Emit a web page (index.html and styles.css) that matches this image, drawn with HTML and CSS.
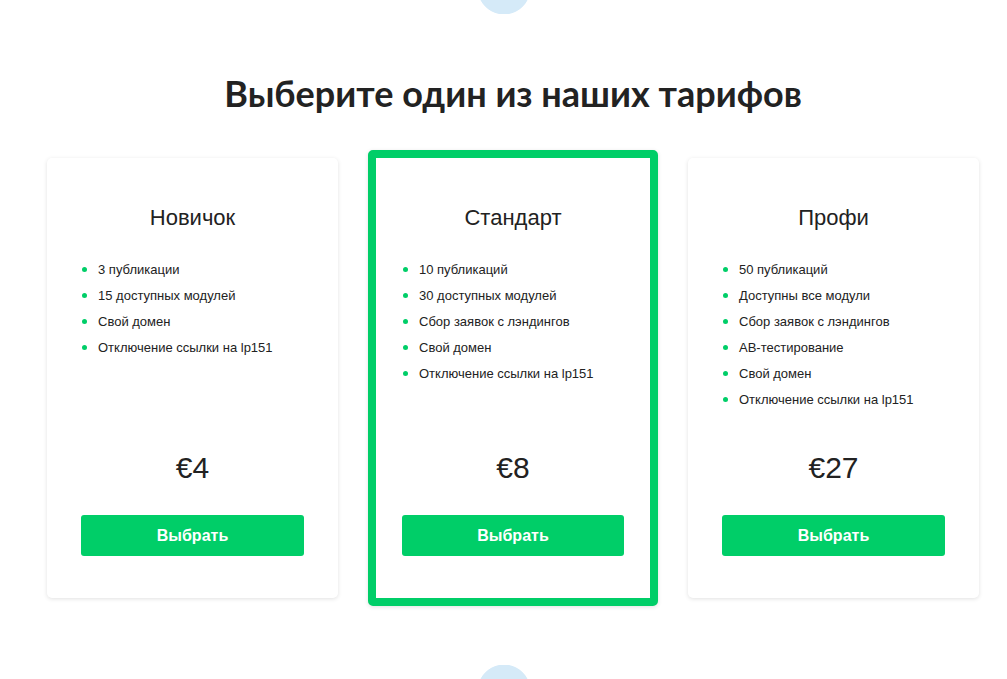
FILE: index.html
```html
<!DOCTYPE html>
<html lang="ru">
<head>
<meta charset="utf-8">
<title>Тарифы</title>
<link rel="stylesheet" href="styles.css">
</head>
<body>
<div class="deco deco-top"></div>
<section class="pricing">
  <h1 class="pricing-title">Выберите один из наших тарифов</h1>
  <div class="plans">
    <div class="plan">
      <h2 class="plan-name">Новичок</h2>
      <ul class="features">
        <li>3 публикации</li>
        <li>15 доступных модулей</li>
        <li>Свой домен</li>
        <li>Отключение ссылки на lp151</li>
      </ul>
      <div class="price">€4</div>
      <button class="choose">Выбрать</button>
    </div>
    <div class="plan plan-featured">
      <h2 class="plan-name">Стандарт</h2>
      <ul class="features">
        <li>10 публикаций</li>
        <li>30 доступных модулей</li>
        <li>Сбор заявок с лэндингов</li>
        <li>Свой домен</li>
        <li>Отключение ссылки на lp151</li>
      </ul>
      <div class="price">€8</div>
      <button class="choose">Выбрать</button>
    </div>
    <div class="plan">
      <h2 class="plan-name">Профи</h2>
      <ul class="features">
        <li>50 публикаций</li>
        <li>Доступны все модули</li>
        <li>Сбор заявок с лэндингов</li>
        <li>АВ-тестирование</li>
        <li>Свой домен</li>
        <li>Отключение ссылки на lp151</li>
      </ul>
      <div class="price">€27</div>
      <button class="choose">Выбрать</button>
    </div>
  </div>
</section>
<div class="deco deco-bottom"></div>
</body>
</html>
```
FILE: styles.css
```css
html, body {
  margin: 0;
  padding: 0;
  background: #ffffff;
}
body {
  font-family: "Liberation Sans", Arial, sans-serif;
  color: #222222;
}
.deco {
  width: 54px;
  height: 14px;
  margin: 0 auto;
  padding-left: 2px;
}
.deco-top {
  background: radial-gradient(circle at 50% -12px, #d5eaf8 26px, rgba(213, 234, 248, 0) 26.8px);
}
.deco-bottom {
  margin-top: 59px;
  background: radial-gradient(circle at 50% 26px, #d5eaf8 26px, rgba(213, 234, 248, 0) 26.8px);
}
.pricing {
  padding-top: 57px;
}
.pricing-title {
  margin: 0;
  text-align: center;
  font-family: "Lato", "Noto Sans", sans-serif;
  font-weight: 700;
  font-size: 36px;
  line-height: 44px;
  color: #222222;
  padding-left: 19px;
}
.plans {
  display: flex;
  justify-content: center;
  align-items: center;
  gap: 30px;
  margin-top: 35px;
  padding-left: 19px;
}
.plan {
  width: 291px;
  height: 440px;
  box-sizing: border-box;
  padding: 47px 34px 42px;
  background: #ffffff;
  border-radius: 5px;
  box-shadow: 0 1px 4px rgba(0, 0, 0, 0.12);
  display: flex;
  flex-direction: column;
}
.plan-featured {
  width: 290px;
  height: 456px;
  border: 8px solid #00ce68;
  padding: 47px 26px 42px;
}
.plan-name {
  margin: 0;
  text-align: center;
  font-weight: 400;
  font-size: 22px;
  line-height: 26px;
  color: #222222;
}
.features {
  list-style: none;
  margin: 26px 0 0;
  padding: 0;
}
.features li {
  position: relative;
  font-size: 13px;
  line-height: 26px;
  padding-left: 17px;
  color: #222222;
}
.features li::before {
  content: "";
  position: absolute;
  left: 1px;
  top: 10px;
  width: 5px;
  height: 5px;
  border-radius: 50%;
  background: #00ce68;
}
.price {
  margin-top: auto;
  text-align: center;
  font-size: 30px;
  line-height: 36px;
  color: #222222;
}
.choose {
  margin-top: 29px;
  height: 41px;
  width: 100%;
  border: 0;
  border-radius: 3px;
  background: #00ce68;
  color: #ffffff;
  font-family: "Liberation Sans", Arial, sans-serif;
  font-weight: 700;
  font-size: 16px;
  cursor: pointer;
}
```
